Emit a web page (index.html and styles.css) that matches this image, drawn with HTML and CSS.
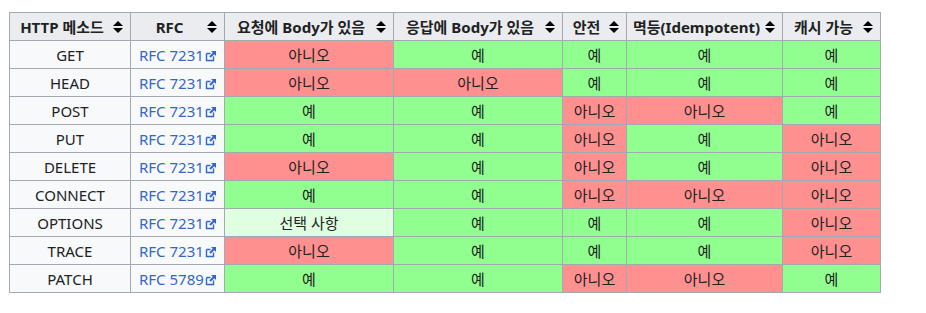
FILE: index.html
```html
<!DOCTYPE html>
<html lang="ko">
<head>
<meta charset="utf-8">
<link rel="stylesheet" href="styles.css">
</head>
<body>
<div class="page">
<table class="wikitable">
  <colgroup>
    <col class="c-method"><col class="c-rfc"><col class="c-req"><col class="c-res"><col class="c-safe"><col class="c-idem"><col class="c-cache">
  </colgroup>
  <thead>
    <tr>
      <th>HTTP 메소드<span class="sort"></span></th>
      <th>RFC<span class="sort"></span></th>
      <th>요청에 Body가 있음<span class="sort"></span></th>
      <th>응답에 Body가 있음<span class="sort"></span></th>
      <th>안전<span class="sort"></span></th>
      <th>멱등(Idempotent)<span class="sort"></span></th>
      <th>캐시 가능<span class="sort"></span></th>
    </tr>
  </thead>
  <tbody>
    <tr><td class="m">GET</td><td class="rfc"><a href="#">RFC 7231<svg class="ext" viewBox="0 0 12 12"><path d="M1.5 3.5h4M1.5 3.5v7h7v-4" fill="none" stroke="#36c" stroke-width="1.4"/><path d="M6 1h5v5l-1.8-1.8-3.5 3.5-1.4-1.4 3.5-3.5z" fill="#36c"/></svg></a></td><td class="no">아니오</td><td class="yes">예</td><td class="yes">예</td><td class="yes">예</td><td class="yes">예</td></tr>
    <tr><td class="m">HEAD</td><td class="rfc"><a href="#">RFC 7231<svg class="ext" viewBox="0 0 12 12"><path d="M1.5 3.5h4M1.5 3.5v7h7v-4" fill="none" stroke="#36c" stroke-width="1.4"/><path d="M6 1h5v5l-1.8-1.8-3.5 3.5-1.4-1.4 3.5-3.5z" fill="#36c"/></svg></a></td><td class="no">아니오</td><td class="no">아니오</td><td class="yes">예</td><td class="yes">예</td><td class="yes">예</td></tr>
    <tr><td class="m">POST</td><td class="rfc"><a href="#">RFC 7231<svg class="ext" viewBox="0 0 12 12"><path d="M1.5 3.5h4M1.5 3.5v7h7v-4" fill="none" stroke="#36c" stroke-width="1.4"/><path d="M6 1h5v5l-1.8-1.8-3.5 3.5-1.4-1.4 3.5-3.5z" fill="#36c"/></svg></a></td><td class="yes">예</td><td class="yes">예</td><td class="no">아니오</td><td class="no">아니오</td><td class="yes">예</td></tr>
    <tr><td class="m">PUT</td><td class="rfc"><a href="#">RFC 7231<svg class="ext" viewBox="0 0 12 12"><path d="M1.5 3.5h4M1.5 3.5v7h7v-4" fill="none" stroke="#36c" stroke-width="1.4"/><path d="M6 1h5v5l-1.8-1.8-3.5 3.5-1.4-1.4 3.5-3.5z" fill="#36c"/></svg></a></td><td class="yes">예</td><td class="yes">예</td><td class="no">아니오</td><td class="yes">예</td><td class="no">아니오</td></tr>
    <tr><td class="m">DELETE</td><td class="rfc"><a href="#">RFC 7231<svg class="ext" viewBox="0 0 12 12"><path d="M1.5 3.5h4M1.5 3.5v7h7v-4" fill="none" stroke="#36c" stroke-width="1.4"/><path d="M6 1h5v5l-1.8-1.8-3.5 3.5-1.4-1.4 3.5-3.5z" fill="#36c"/></svg></a></td><td class="no">아니오</td><td class="yes">예</td><td class="no">아니오</td><td class="yes">예</td><td class="no">아니오</td></tr>
    <tr><td class="m">CONNECT</td><td class="rfc"><a href="#">RFC 7231<svg class="ext" viewBox="0 0 12 12"><path d="M1.5 3.5h4M1.5 3.5v7h7v-4" fill="none" stroke="#36c" stroke-width="1.4"/><path d="M6 1h5v5l-1.8-1.8-3.5 3.5-1.4-1.4 3.5-3.5z" fill="#36c"/></svg></a></td><td class="yes">예</td><td class="yes">예</td><td class="no">아니오</td><td class="no">아니오</td><td class="no">아니오</td></tr>
    <tr><td class="m">OPTIONS</td><td class="rfc"><a href="#">RFC 7231<svg class="ext" viewBox="0 0 12 12"><path d="M1.5 3.5h4M1.5 3.5v7h7v-4" fill="none" stroke="#36c" stroke-width="1.4"/><path d="M6 1h5v5l-1.8-1.8-3.5 3.5-1.4-1.4 3.5-3.5z" fill="#36c"/></svg></a></td><td class="opt">선택 사항</td><td class="yes">예</td><td class="yes">예</td><td class="yes">예</td><td class="no">아니오</td></tr>
    <tr><td class="m">TRACE</td><td class="rfc"><a href="#">RFC 7231<svg class="ext" viewBox="0 0 12 12"><path d="M1.5 3.5h4M1.5 3.5v7h7v-4" fill="none" stroke="#36c" stroke-width="1.4"/><path d="M6 1h5v5l-1.8-1.8-3.5 3.5-1.4-1.4 3.5-3.5z" fill="#36c"/></svg></a></td><td class="no">아니오</td><td class="yes">예</td><td class="yes">예</td><td class="yes">예</td><td class="no">아니오</td></tr>
    <tr><td class="m">PATCH</td><td class="rfc"><a href="#">RFC 5789<svg class="ext" viewBox="0 0 12 12"><path d="M1.5 3.5h4M1.5 3.5v7h7v-4" fill="none" stroke="#36c" stroke-width="1.4"/><path d="M6 1h5v5l-1.8-1.8-3.5 3.5-1.4-1.4 3.5-3.5z" fill="#36c"/></svg></a></td><td class="yes">예</td><td class="yes">예</td><td class="no">아니오</td><td class="no">아니오</td><td class="yes">예</td></tr>
  </tbody>
</table>
</div>
</body>
</html>
```
FILE: styles.css
```css
html, body {
  margin: 0;
  padding: 0;
  background: #fff;
}
.page {
  padding: 12px 0 0 9px;
  font-family: "Noto Sans", "Noto Sans CJK KR", sans-serif;
  font-size: 15px;
  color: #202122;
}
.wikitable {
  border-collapse: collapse;
  table-layout: fixed;
  width: 872px;
  background: #f8f9fa;
  border: 1px solid #a2a9b1;
}
.c-method { width: 121px; }
.c-rfc { width: 94px; }
.c-req { width: 169px; }
.c-res { width: 169px; }
.c-safe { width: 64px; }
.c-idem { width: 156px; }
.c-cache { width: 98px; }
.wikitable th, .wikitable td {
  border: 1px solid #a2a9b1;
  height: 28px;
  padding: 0 5px;
  box-sizing: border-box;
  line-height: 20px;
  text-align: center;
  white-space: nowrap;
  overflow: hidden;
}
.wikitable th {
  background: #eaecf0;
  font-weight: bold;
  padding-right: 21px;
  position: relative;
}
.sort {
  position: absolute;
  right: 7px;
  top: 50%;
  margin-top: -6px;
  width: 10px;
  height: 12px;
}
.sort::before, .sort::after {
  content: "";
  position: absolute;
  left: 0;
  border-left: 5px solid transparent;
  border-right: 5px solid transparent;
}
.sort::before {
  top: 0;
  border-bottom: 5px solid #000;
}
.sort::after {
  bottom: 0;
  border-top: 5px solid #000;
}
.wikitable td.rfc {
  text-align: left;
  padding-left: 8px;
}
.rfc a {
  color: #36c;
  text-decoration: none;
}
.ext {
  width: 12px;
  height: 12px;
  margin-left: 1px;
  vertical-align: -1px;
}
.yes { background: #90ff90; color: #202122; }
.no { background: #ff9090; color: #202122; }
.opt { background: #e0ffe0; color: #202122; }
```
